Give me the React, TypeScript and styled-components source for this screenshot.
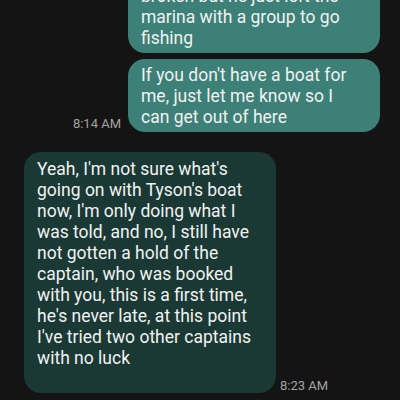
import React from 'react';
import styled, { createGlobalStyle } from 'styled-components';

interface Message {
	id: number;
	fromMe: boolean;
	text: string;
	time?: string;
}

// the first one is scrolled half out of view, only its tail shows
const messages: Message[] = [
	{
		id: 1,
		fromMe: true,
		text: "I checked and Tyson's boat isn't\nbroken but he just left the marina with a group to go fishing",
	},
	{
		id: 2,
		fromMe: true,
		text: "If you don't have a boat for me, just let me know so I can get out of here",
		time: '8:14 AM',
	},
	{
		id: 3,
		fromMe: false,
		text: "Yeah, I'm not sure what's going on with Tyson's boat now, I'm only doing what I was told, and no, I still have not gotten a hold of the captain, who was booked with you, this is a first time, he's never late, at this point I've tried two other captains with no luck",
		time: '8:23 AM',
	},
];

const GlobalStyle = createGlobalStyle`
	html, body {
		margin: 0;
		padding: 0;
		background: #151414;
	}
`;

const Thread = styled.div`
	width: 400px;
	height: 400px;
	overflow: hidden;
	display: flex;
	flex-direction: column;
	justify-content: flex-end;
	padding: 0 20px 7px 24px;
	box-sizing: border-box;
	background: #151414;
	font-family: Roboto, 'Liberation Sans', sans-serif;
`;

const Row = styled.div<{ $fromMe: boolean; $gapAfter: number }>`
	display: flex;
	flex-direction: ${(p) => (p.$fromMe ? 'row-reverse' : 'row')};
	align-items: flex-end;
	gap: ${(p) => (p.$fromMe ? 7 : 4)}px;
	margin-bottom: ${(p) => p.$gapAfter}px;
	flex-shrink: 0;
`;

const Bubble = styled.div<{ $fromMe: boolean }>`
	width: 252px;
	box-sizing: border-box;
	border-radius: 17px;
	padding: ${(p) => (p.$fromMe ? '6px 17px 4px 13px' : '7px 17px 24px 13px')};
	background: ${(p) => (p.$fromMe ? '#3c8077' : '#1a3934')};
	color: #f2f2f2;
	font-size: 17.5px;
	line-height: 21px;
	white-space: pre-line;
`;

const Time = styled.span<{ $fromMe: boolean }>`
	color: #a3a3a3;
	font-size: 13px;
	line-height: 15px;
	white-space: nowrap;
	margin-bottom: ${(p) => (p.$fromMe ? 1 : 0)}px;
`;

export default function App() {
	return (
		<>
			<GlobalStyle />
			<Thread>
				{messages.map((m, i) => {
					const next = messages[i + 1];
					const gapAfter = !next ? 0 : next.fromMe === m.fromMe ? 6 : 20;
					return (
						<Row key={m.id} $fromMe={m.fromMe} $gapAfter={gapAfter}>
							<Bubble $fromMe={m.fromMe}>{m.text}</Bubble>
							{m.time && <Time $fromMe={m.fromMe}>{m.time}</Time>}
						</Row>
					);
				})}
			</Thread>
		</>
	);
}
